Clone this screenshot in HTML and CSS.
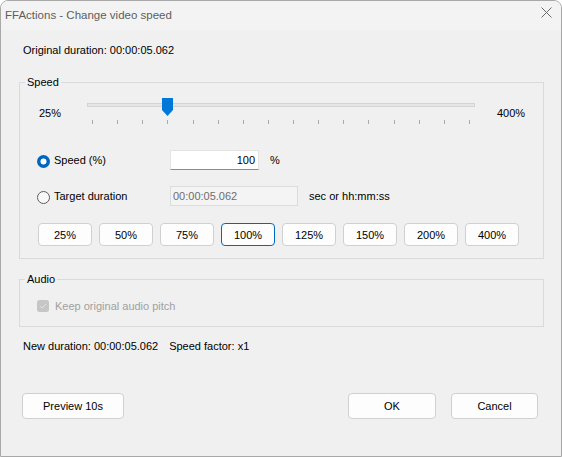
FILE: index.html
```html
<!DOCTYPE html>
<html>
<head>
<meta charset="utf-8">
<title>FFActions - Change video speed</title>
<link rel="stylesheet" href="styles.css">
</head>
<body>
<div class="window">
  <div class="titlebar">
    <span class="title">FFActions - Change video speed</span>
    <svg class="close" width="11" height="11" viewBox="0 0 11 11"><path d="M0.5 0.5 L10.5 10.5 M10.5 0.5 L0.5 10.5" stroke="#6a6a6a" stroke-width="1" fill="none"/></svg>
  </div>
  <div class="content">
    <div class="orig">Original duration: 00:00:05.062</div>

    <fieldset class="group speed">
      <legend>Speed</legend>
      <div class="slider-row">
        <span class="lbl-min">25%</span>
        <div class="slider">
          <div class="track"></div>
          <svg class="thumb" style="left:75px" width="11" height="18" viewBox="0 0 11 18"><path d="M0 0 H11 V12 L5.5 18 L0 12 Z" fill="#0078d7"/></svg>
          <div class="ticks">
            <span></span><span></span><span></span><span></span><span></span><span></span><span></span><span></span>
            <span></span><span></span><span></span><span></span><span></span><span></span><span></span><span></span>
          </div>
        </div>
        <span class="lbl-max">400%</span>
      </div>

      <div class="opt-row first">
        <label class="opt">
          <svg class="radio" width="13" height="13" viewBox="0 0 13 13"><circle cx="6.5" cy="6.5" r="6.5" fill="#0067c0"/><circle cx="6.5" cy="6.5" r="3" fill="#ffffff"/></svg>
          <span>Speed (%)</span>
        </label>
        <div class="field speed-field">100</div>
        <span class="unit">%</span>
      </div>

      <div class="opt-row second">
        <label class="opt">
          <svg class="radio" width="13" height="13" viewBox="0 0 13 13"><circle cx="6.5" cy="6.5" r="6" fill="#f8f8f8" stroke="#5d5d5d" stroke-width="1"/></svg>
          <span>Target duration</span>
        </label>
        <div class="field dur-field">00:00:05.062</div>
        <span class="unit unit-dur">sec or hh:mm:ss</span>
      </div>

      <div class="presets">
        <button class="btn preset">25%</button>
        <button class="btn preset">50%</button>
        <button class="btn preset">75%</button>
        <button class="btn preset active">100%</button>
        <button class="btn preset">125%</button>
        <button class="btn preset">150%</button>
        <button class="btn preset">200%</button>
        <button class="btn preset">400%</button>
      </div>
    </fieldset>

    <fieldset class="group audio">
      <legend>Audio</legend>
      <div class="check-row">
        <svg class="check" width="12" height="12" viewBox="0 0 12 12"><rect x="0" y="0" width="12" height="12" rx="2.5" fill="#c6c6c6"/><path d="M3.2 6.2 L5.1 8 L8.8 4.2" stroke="#e4e4e4" stroke-width="1" fill="none"/></svg>
        <span class="disabled">Keep original audio pitch</span>
      </div>
    </fieldset>

    <div class="status">
      <span>New duration: 00:00:05.062</span>
      <span class="factor">Speed factor: x1</span>
    </div>

    <div class="actions">
      <button class="btn preview">Preview 10s</button>
      <button class="btn ok">OK</button>
      <button class="btn cancel">Cancel</button>
    </div>
  </div>
</div>
</body>
</html>
```
FILE: styles.css
```css
html, body {
  margin: 0;
  padding: 0;
  background: #ffffff;
}

body {
  font-family: "Liberation Sans", Arial, sans-serif;
  font-size: 11px;
  color: #000000;
}

.window {
  width: 560px;
  height: 455px;
  border: 1px solid #a8a8a8;
  border-radius: 8px 8px 0 0;
  background: #f0f0f0;
  overflow: hidden;
  display: flex;
  flex-direction: column;
}

.titlebar {
  height: 29px;
  flex: none;
  display: flex;
  align-items: center;
  justify-content: space-between;
  padding: 0 9px 0 4px;
  background: #f3f3f3;
}

.title {
  font-size: 11.5px;
  color: #5e5e5e;
  line-height: 14px;
  margin-top: -2px;
}

.close {
  align-self: flex-start;
  margin-top: 6px;
}

.content {
  display: flex;
  flex-direction: column;
}

.orig {
  margin-top: 13px;
  padding-left: 22px;
  line-height: 14px;
}

.group {
  margin: 0 0 0 18px;
  padding: 0;
  width: 523px;
  border: 1px solid #dadada;
  min-width: 0;
}

.group legend {
  margin-left: 5px;
  padding: 0 2px;
  line-height: 14px;
}

.speed {
  margin-top: 18px;
  padding-bottom: 12px;
}

.slider-row {
  display: flex;
  align-items: flex-start;
  margin-top: 8px;
  padding-left: 19px;
  height: 26px;
}

.lbl-min {
  width: 48px;
  margin-top: 9px;
  line-height: 14px;
}

.lbl-max {
  margin-left: 22px;
  margin-top: 9px;
  line-height: 14px;
}

.slider {
  position: relative;
  width: 388px;
  height: 26px;
}

.track {
  margin-top: 6px;
  height: 2px;
  background: #e6e6e6;
  border: 1px solid #d4d4d4;
}

.thumb {
  position: absolute;
  top: 1px;
}

.ticks {
  display: flex;
  justify-content: space-between;
  padding: 0 5px;
  margin-top: 13px;
  height: 4px;
}

.ticks span {
  width: 1px;
  height: 4px;
  background: #a9a9a9;
}

.opt-row {
  display: flex;
  align-items: center;
  height: 20px;
  padding-left: 17px;
}

.opt-row.first {
  margin-top: 27px;
}

.opt-row.second {
  margin-top: 16px;
}

.opt {
  width: 133px;
  display: flex;
  align-items: center;
  line-height: 14px;
}

.radio {
  flex: none;
  margin-right: 4px;
  margin-top: 2px;
}

.field {
  box-sizing: border-box;
  height: 20px;
  line-height: 18px;
  padding: 0 3px;
}

.speed-field {
  width: 89px;
  background: #ffffff;
  border: 1px solid #e3e3e3;
  border-bottom-color: #8c8c8c;
  text-align: right;
}

.dur-field {
  width: 128px;
  background: #f4f4f4;
  border: 1px solid #dcdcdc;
  color: #6d6d6d;
  padding-left: 2px;
}

.unit {
  margin-left: 11px;
}

.unit-dur {
  margin-left: 11px;
}

.presets {
  display: flex;
  gap: 7px;
  margin-top: 17px;
  padding-left: 18px;
}

.btn {
  box-sizing: border-box;
  font-family: "Liberation Sans", Arial, sans-serif;
  font-size: 11px;
  color: #000000;
  background: #fdfdfd;
  border: 1px solid #d0d0d0;
  border-radius: 4px;
  padding: 0;
  margin: 0;
}

.preset {
  width: 54px;
  height: 23px;
}

.preset.active {
  border-color: #0067c0;
}

.audio {
  margin-top: 13px;
  padding-bottom: 13px;
}

.check-row {
  display: flex;
  align-items: center;
  margin-top: 13px;
  padding-left: 17px;
  height: 14px;
}

.check {
  flex: none;
  margin-right: 6px;
}

.disabled {
  color: #a0a0a0;
  line-height: 14px;
}

.status {
  margin-top: 12px;
  padding-left: 22px;
  line-height: 14px;
  display: flex;
}

.factor {
  margin-left: 11px;
}

.actions {
  display: flex;
  margin-top: 40px;
  padding: 0 23px 0 21px;
}

.actions .btn {
  height: 26px;
}

.preview {
  width: 102px;
}

.ok {
  width: 88px;
  margin-left: auto;
}

.cancel {
  width: 87px;
  margin-left: 15px;
}
```
